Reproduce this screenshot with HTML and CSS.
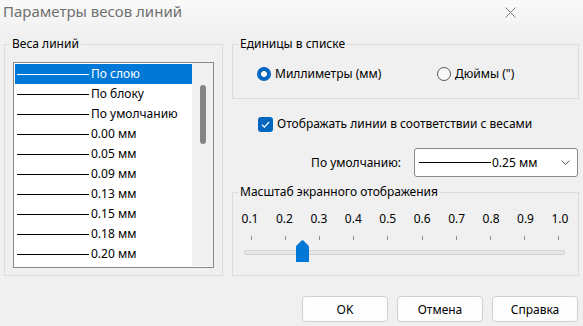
FILE: index.html
```html
<!DOCTYPE html>
<html lang="ru">
<head>
<meta charset="utf-8">
<title>Параметры весов линий</title>
<link rel="stylesheet" href="styles.css">
</head>
<body>
<div class="titlebar">
  <span class="title">Параметры весов линий</span>
  <svg class="close" viewBox="0 0 11 11" width="11" height="11"><path d="M0.5 0.5 L10.5 10.5 M10.5 0.5 L0.5 10.5" stroke="#7a7a7a" stroke-width="1" fill="none"/></svg>
</div>
<div class="main">
  <fieldset class="group weights">
    <legend>Веса линий</legend>
    <div class="listbox">
      <ul class="rows">
        <li class="row selected"><span class="line"></span><span>По слою</span></li>
        <li class="row"><span class="line"></span><span>По блоку</span></li>
        <li class="row"><span class="line"></span><span>По умолчанию</span></li>
        <li class="row"><span class="line"></span><span>0.00 мм</span></li>
        <li class="row"><span class="line"></span><span>0.05 мм</span></li>
        <li class="row"><span class="line"></span><span>0.09 мм</span></li>
        <li class="row"><span class="line"></span><span>0.13 мм</span></li>
        <li class="row"><span class="line"></span><span>0.15 мм</span></li>
        <li class="row"><span class="line"></span><span>0.18 мм</span></li>
        <li class="row"><span class="line"></span><span>0.20 мм</span></li>
      </ul>
      <div class="scrollbar"><div class="thumb"></div></div>
    </div>
  </fieldset>
  <div class="right">
    <fieldset class="group units">
      <legend>Единицы в списке</legend>
      <div class="radios">
        <label class="radio"><span class="dot on"></span><span>Миллиметры (мм)</span></label>
        <label class="radio"><span class="dot"></span><span>Дюймы (")</span></label>
      </div>
    </fieldset>
    <label class="check"><span class="box"><svg viewBox="0 0 15 15" width="15" height="15"><path d="M4 7.8 L6.4 10.1 L11 5" stroke="#fff" stroke-width="1.2" fill="none"/></svg></span><span>Отображать линии в соответствии с весами</span></label>
    <div class="default-row">
      <span class="default-label">По умолчанию:</span>
      <div class="combo">
        <span class="line"></span><span>0.25 мм</span>
        <svg class="chev" viewBox="0 0 9 5" width="9" height="5"><path d="M0.5 0.5 L4.5 4.5 L8.5 0.5" stroke="#5f5f5f" stroke-width="1" fill="none"/></svg>
      </div>
    </div>
    <fieldset class="group scale">
      <legend>Масштаб экранного отображения</legend>
      <div class="scale-labels">
        <span>0.1</span><span>0.2</span><span>0.3</span><span>0.4</span><span>0.5</span><span>0.6</span><span>0.7</span><span>0.8</span><span>0.9</span><span>1.0</span>
      </div>
      <div class="ticks"><i></i><i></i><i></i><i></i><i></i><i></i><i></i><i></i><i></i><i></i></div>
      <div class="slider">
        <div class="track"></div>
        <svg class="knob" viewBox="0 0 13 22" width="13" height="22"><path d="M5.6 0.6 Q6.5 -0.1 7.4 0.6 L12.4 5.6 Q13 6.2 13 7 L13 22 L0 22 L0 7 Q0 6.2 0.6 5.6 Z" fill="#0078d7"/></svg>
      </div>
    </fieldset>
  </div>
</div>
<div class="footer">
  <button class="btn">OK</button>
  <button class="btn">Отмена</button>
  <button class="btn">Справка</button>
</div>
</body>
</html>
```
FILE: styles.css
```css
* { box-sizing: border-box; }
html, body { margin: 0; padding: 0; }
body {
  width: 583px;
  height: 326px;
  overflow: hidden;
  background: #f0f0f0;
  font-family: "Noto Sans", "Open Sans", sans-serif;
  font-size: 12px;
  line-height: 16px;
  color: #000;
}
.titlebar {
  height: 36px;
  display: flex;
  justify-content: space-between;
  align-items: flex-start;
  padding: 2px 0 0 3px;
  background: linear-gradient(#fafafa, #f0f0f0);
}
.title { font-size: 15px; line-height: 18px; color: #707070; }
.close { margin: 5px 67px 0 0; }

.main { display: flex; gap: 9px; padding-left: 4px; }
.group {
  margin: 0;
  padding: 0;
  border: 1px solid #dcdcdc;
  min-width: 0;
}
.group legend {
  margin-left: 5px;
  padding: 0 2px;
  font-size: 12px;
  line-height: 16px;
}
.weights { width: 219px; }
.listbox {
  margin: 10px 8px 7px 8px;
  height: 206px;
  border: 1px solid #828790;
  background: #fff;
  display: flex;
}
.rows {
  list-style: none;
  margin: 1px 0 0 1px;
  padding: 0;
  width: 177px;
}
.row {
  height: 20px;
  display: flex;
  align-items: center;
  padding-left: 2px;
  white-space: nowrap;
}
.line {
  display: inline-block;
  width: 72px;
  height: 1px;
  background: #000;
  margin-right: 2px;
  flex: none;
}
.row.selected { background: #0078d7; color: #fff; }
.row.selected .line { background: #fff; }
.scrollbar {
  flex: 1;
  background: #f0f0f0;
  margin-bottom: 1px;
}
.thumb {
  width: 6px;
  height: 59px;
  margin: 22px auto 0;
  background: #858585;
  border-radius: 3px;
}

.right { width: 347px; display: flex; flex-direction: column; }
.radios {
  display: flex;
  align-items: center;
  padding: 14px 0 16px 24px;
}
.radio { display: flex; align-items: center; gap: 4px; }
.radio:first-child { width: 180px; }
.dot {
  width: 14px;
  height: 14px;
  border-radius: 50%;
  border: 1px solid #5a5a5a;
  background: #f7f7f7;
  flex: none;
}
.dot.on {
  border: none;
  background: radial-gradient(circle, #fff 0 2.6px, #0067c0 3.2px);
}
.check {
  display: flex;
  align-items: center;
  gap: 4px;
  margin: 17px 0 0 26px;
}
.box {
  width: 15px;
  height: 15px;
  border-radius: 3px;
  background: #0067c0;
  display: flex;
  flex: none;
}
.default-row {
  display: flex;
  justify-content: flex-end;
  align-items: center;
  margin-top: 16px;
}
.default-label { margin-right: 13px; }
.combo {
  width: 164px;
  height: 29px;
  margin-right: 1px;
  border: 1px solid #8a8a8a;
  border-radius: 3px;
  background: #fff;
  display: flex;
  align-items: center;
  padding-left: 4px;
}
.combo .line { margin-right: 1px; }
.chev { margin: 0 7px 0 auto; }

.scale { margin-top: 7px; }
.scale-labels {
  display: flex;
  justify-content: space-between;
  width: 330px;
  margin: 11px 0 0 7px;
}
.scale-labels span { width: 20px; text-align: center; }
.ticks {
  display: flex;
  justify-content: space-between;
  width: 308px;
  height: 4px;
  margin: 9px 0 0 18px;
}
.ticks i { width: 1px; background: #8f8f8f; }
.slider {
  position: relative;
  width: 321px;
  height: 22px;
  padding-top: 10px;
  margin: 0 0 13px 11px;
}
.track {
  height: 5px;
  border: 1px solid #d4d4d4;
  background: #e6e6e6;
  border-radius: 2px;
}
.knob { position: absolute; left: 52px; top: 0; }

.footer {
  display: flex;
  justify-content: flex-end;
  gap: 9px;
  padding-right: 5px;
  margin-top: 20px;
}
.btn {
  width: 86px;
  height: 26px;
  border: 1px solid #d0d0d0;
  border-radius: 4px;
  background: #fdfdfd;
  font-family: inherit;
  font-size: 12px;
  color: #000;
  padding: 0;
}
```
